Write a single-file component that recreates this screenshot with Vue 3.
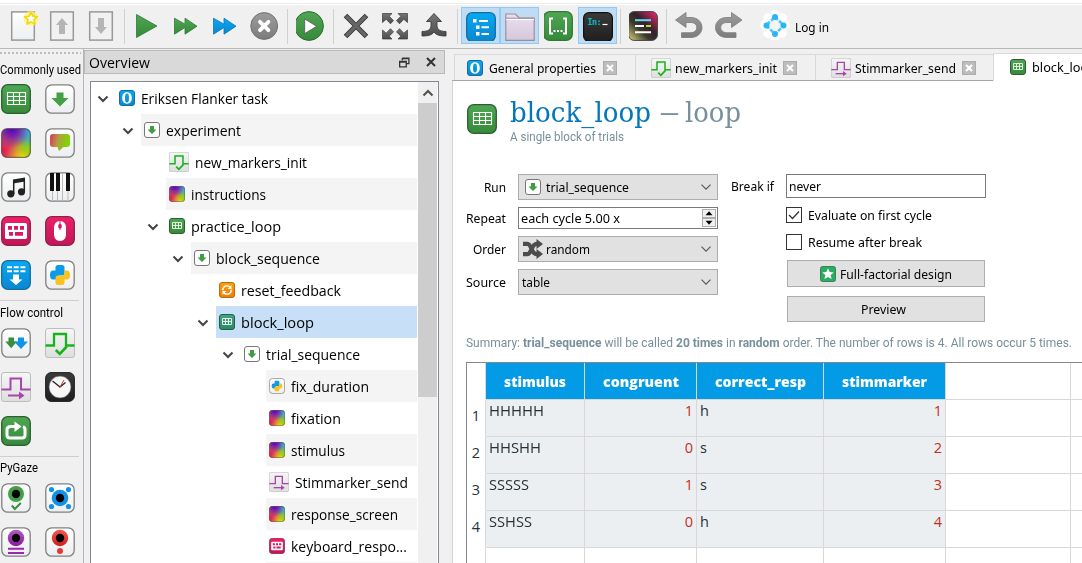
<script setup>
// Stretches a label horizontally to a given width, keeping the flow width in step.
const vFit = {
  mounted(el, binding) {
    const natural = el.getBoundingClientRect().width
    if (!natural || !binding.value) return
    el.style.transform = `scaleX(${binding.value / natural})`
    el.style.marginRight = `${binding.value - natural}px`
  },
}

const tools = [
  { icon: 'new' }, { icon: 'open' }, { icon: 'save' }, { sep: true },
  { icon: 'play' }, { icon: 'ff-green' }, { icon: 'ff-blue' }, { icon: 'stop' }, { sep: true },
  { icon: 'run' }, { sep: true },
  { icon: 'cross' }, { icon: 'expand' }, { icon: 'merge' }, { sep: true },
  { icon: 'list', on: true }, { icon: 'folder', on: true }, { icon: 'braces' }, { icon: 'console', on: true }, { sep: true },
  { icon: 'theme' }, { sep: true },
  { icon: 'undo' }, { icon: 'redo' },
]

const groups = [
  { name: 'Commonly used', w: 81, icons: ['loop', 'seq', 'sketch', 'feedback', 'sampler', 'synth', 'keyboard', 'mouse', 'logger', 'python'] },
  { name: 'Flow control', w: 63, icons: ['parallel', 'minit', 'msend', 'clock', 'repeat'] },
  { name: 'PyGaze', w: 38, icons: ['gaze-ok', 'gaze-cal', 'gaze-log', 'gaze-rec'] },
]

const tree = [
  { d: 0, icon: 'exp', t: 'Eriksen Flanker task', w: 127, open: true },
  { d: 1, icon: 'seq', t: 'experiment', w: 75, open: true },
  { d: 2, icon: 'minit', t: 'new_markers_init', w: 112, big: true },
  { d: 2, icon: 'sketch', t: 'instructions', w: 75 },
  { d: 2, icon: 'loop-s', t: 'practice_loop', w: 90, open: true },
  { d: 3, icon: 'seq', t: 'block_sequence', w: 104, open: true },
  { d: 4, icon: 'reset', t: 'reset_feedback', w: 100 },
  { d: 4, icon: 'loop-s', t: 'block_loop', w: 73, open: true, sel: true },
  { d: 5, icon: 'seq', t: 'trial_sequence', w: 94, open: true },
  { d: 6, icon: 'python', t: 'fix_duration', w: 78 },
  { d: 6, icon: 'sketch', t: 'fixation', w: 50 },
  { d: 6, icon: 'sketch', t: 'stimulus', w: 54 },
  { d: 6, icon: 'msend', t: 'Stimmarker_send', w: 113, big: true },
  { d: 6, icon: 'sketch', t: 'response_screen', w: 107 },
  { d: 6, icon: 'keyboard', t: 'keyboard_respo...', w: 116 },
  { d: 6, icon: '', t: '', w: 0 },
]

const tabs = [
  { icon: 'exp', t: 'General properties', w: 107, cls: 't1' },
  { icon: 'minit', t: 'new_markers_init', w: 102, cls: 't2', big: true },
  { icon: 'msend', t: 'Stimmarker_send', w: 101, cls: 't3', big: true },
  { icon: 'loop-s', t: 'block_loop', w: 64, cls: 't4', active: true },
]

const heads = [['stimulus', 62], ['congruent', 76], ['correct_resp', 91], ['stimmarker', 85]]
const rows = [
  ['HHHHH', 55, 1, 'h', 1],
  ['HHSHH', 52, 0, 's', 2],
  ['SSSSS', 40, 1, 's', 3],
  ['SSHSS', 43, 0, 'h', 4],
]
</script>

<template>
  <svg class="sprite" width="0" height="0">
    <defs>
      <linearGradient id="gW" x1="0" y1="0" x2="0" y2="1"><stop offset="0" stop-color="#fff" /><stop offset="1" stop-color="#eceef0" /></linearGradient>
      <linearGradient id="gG" x1="0" y1="0" x2="0" y2="1"><stop offset="0" stop-color="#4fa653" /><stop offset="1" stop-color="#368a3b" /></linearGradient>
      <linearGradient id="gB" x1="0" y1="0" x2="0" y2="1"><stop offset="0" stop-color="#06a9f4" /><stop offset="1" stop-color="#0b86d0" /></linearGradient>
      <linearGradient id="gP" x1="0" y1="0" x2="0" y2="1"><stop offset="0" stop-color="#ec2068" /><stop offset="1" stop-color="#c01659" /></linearGradient>
      <linearGradient id="gO" x1="0" y1="0" x2="0" y2="1"><stop offset="0" stop-color="#ff9d0a" /><stop offset="1" stop-color="#f57c00" /></linearGradient>
      <linearGradient id="gK" x1="0" y1="0" x2="0" y2="1"><stop offset="0" stop-color="#3a3a3a" /><stop offset="1" stop-color="#1f1f1f" /></linearGradient>
      <linearGradient id="gM" x1="0" y1="0" x2="0" y2="1"><stop offset="0" stop-color="#f6f6f6" /><stop offset="1" stop-color="#dedede" /></linearGradient>
      <linearGradient id="gF" x1="0" y1="0" x2="0" y2="1"><stop offset="0" stop-color="#eadff0" /><stop offset="1" stop-color="#d5c7da" /></linearGradient>
      <linearGradient id="gV" x1="0" y1="0" x2="0" y2="1"><stop offset="0" stop-color="#b45bc4" /><stop offset="1" stop-color="#8a1aa0" /></linearGradient>
      <linearGradient id="gR" x1="0" y1="0" x2="0" y2="1"><stop offset="0" stop-color="#f4574b" /><stop offset="1" stop-color="#cf1f1f" /></linearGradient>
      <linearGradient id="gT" x1="0" y1="1" x2="1" y2="0"><stop offset="0" stop-color="#e0d77a" /><stop offset=".38" stop-color="#3a382c" /><stop offset=".58" stop-color="#33222a" /><stop offset="1" stop-color="#f92672" /></linearGradient>
      <linearGradient id="gE" x1="0" y1="0" x2="0" y2="1"><stop offset="0" stop-color="#777" /><stop offset="1" stop-color="#4c4c4c" /></linearGradient>
      <linearGradient id="gH" x1="0" y1="0" x2="0" y2="1"><stop offset="0" stop-color="#9c9c9c" /><stop offset="1" stop-color="#7c7c7c" /></linearGradient>
      <linearGradient id="gC" x1="0" y1="0" x2="1" y2=".2"><stop offset="0" stop-color="#e0305a" /><stop offset=".45" stop-color="#b0a040" /><stop offset="1" stop-color="#7bd800" /></linearGradient>
      <radialGradient id="r1" cx=".35" cy="0" r=".68"><stop offset="0" stop-color="#4a00c8" /><stop offset=".35" stop-color="#6a10b8" stop-opacity=".85" /><stop offset="1" stop-color="#8020a0" stop-opacity="0" /></radialGradient>
      <radialGradient id="r2" cx="1" cy=".05" r=".65"><stop offset="0" stop-color="#22d0f0" /><stop offset=".4" stop-color="#2cb8e8" stop-opacity=".8" /><stop offset="1" stop-color="#30a0e0" stop-opacity="0" /></radialGradient>
      <radialGradient id="r3" cx="1" cy=".6" r=".6"><stop offset="0" stop-color="#7ce800" /><stop offset="1" stop-color="#80d020" stop-opacity="0" /></radialGradient>
      <radialGradient id="r4" cx=".75" cy="1" r=".6"><stop offset="0" stop-color="#fff000" /><stop offset="1" stop-color="#ffb000" stop-opacity="0" /></radialGradient>
      <radialGradient id="r5" cx="0" cy=".75" r=".75"><stop offset="0" stop-color="#f0104c" /><stop offset="1" stop-color="#e03060" stop-opacity="0" /></radialGradient>
    </defs>

    <!-- toolbar -->
    <symbol id="i-new" viewBox="0 0 30 30"><rect x="2.7" y=".9" width="22.6" height="28.2" fill="url(#gW)" stroke="#999" stroke-width="1.5" /><circle cx="22" cy="7.5" r="7.5" fill="#fff176" opacity=".75" /><path d="M22 1.200l1.900 4 4.400.5-3.300 3 .9 4.400-3.900-2.200-3.900 2.200.9-4.400-3.300-3 4.400-.5z" fill="#fff" stroke="#f2d600" stroke-width="1.600" stroke-linejoin="round" /></symbol>
    <symbol id="i-open" viewBox="0 0 30 30"><rect x="2.700" y=".9" width="22.600" height="28.200" fill="#f1f1f1" stroke="#999" stroke-width="1.500" /><path d="M14 7l6 7h-3v9h-6v-9H8z" fill="#b5b5b5" /></symbol>
    <symbol id="i-save" viewBox="0 0 30 30"><rect x="2.700" y=".9" width="22.600" height="28.200" fill="#f1f1f1" stroke="#999" stroke-width="1.500" /><path d="M14 23l6-7h-3V7h-6v9H8z" fill="#b5b5b5" /></symbol>
    <symbol id="i-play" viewBox="0 0 30 30"><path d="M3.500 3.500v23L24 15z" fill="url(#gG)" stroke="#2f7a34" stroke-width=".8" /></symbol>
    <symbol id="i-ff-green" viewBox="0 0 30 30"><path d="M2.500 7.200v16L13 16.500v6.700l12-8-12-8v6z" fill="url(#gG)" stroke="#2f7a34" stroke-width=".8" /></symbol>
    <symbol id="i-ff-blue" viewBox="0 0 30 30"><path d="M2.500 7.200v16L13 16.500v6.700l12-8-12-8v6z" fill="url(#gB)" stroke="#0b73b5" stroke-width=".8" /></symbol>
    <symbol id="i-stop" viewBox="0 0 30 30"><circle cx="14.200" cy="15" r="13.400" fill="url(#gH)" stroke="#707070" stroke-width="1" /><path d="M10 10.800l8.400 8.400m0-8.400l-8.400 8.400" stroke="#fff" stroke-width="3.800" stroke-linecap="round" /></symbol>
    <symbol id="i-run" viewBox="-2 0 30 30"><circle cx="11" cy="15" r="14.400" fill="url(#gG)" stroke="#2d6e31" stroke-width="1" /><path d="M6.700 8v14.600l12-7.300z" fill="#fff" stroke="#555" stroke-width=".8" /></symbol>
    <symbol id="i-cross" viewBox="0 0 30 30"><path d="M3.500 4.500l21 21m0-21l-21 21" stroke="#333" stroke-width="5" /><path d="M4 5l20 20m0-20L4 25" stroke="#666" stroke-width="3.400" /></symbol>
    <symbol id="i-expand" viewBox="0 0 30 30"><g fill="url(#gE)" stroke="#3a3a3a" stroke-width=".7"><path d="M1.500 2.500h9.500l-2.800 2.800 4.300 4.300-3 3.200-4.300-4.500-3.700 3.200z" /><path d="M26.500 2.500H17l2.800 2.800-4.300 4.300 3 3.200 4.300-4.500 3.700 3.200z" /><path d="M1.500 28h9.500l-2.800-2.800 4.300-4.300-3-3.200-4.300 4.500-3.700-3.200z" /><path d="M26.500 28H17l2.800-2.800-4.300-4.300 3-3.200 4.300 4.500 3.700-3.200z" /></g></symbol>
    <symbol id="i-merge" viewBox="0 0 30 30"><path d="M14 2.500l7.500 8h-4.500v4c0 4 3 6 9 6V25c-6 0-10-1-12-4-2 3-6 4-12 4v-4.500c6 0 9-2 9-6v-4H6.500z" fill="url(#gE)" stroke="#3a3a3a" stroke-width=".9" /></symbol>
    <symbol id="i-list" viewBox="0 -1 30 30"><rect x=".7" y=".7" width="28.600" height="28.600" rx="5.500" fill="url(#gB)" stroke="#176b9e" stroke-width="1.300" /><path d="M7 7h3.500v3.500H7zM10 13.500h3.500V17H10zM10 20h3.500v3.500H10zM13 8h9v2h-9zM15.500 14.300H23v2h-7.500zM15.500 21H23v2h-7.500z" fill="#fff" /></symbol>
    <symbol id="i-folder" viewBox="0 0 30 30"><path d="M.8 29.300V3h9.500l4 4h14.900v22.300z" fill="url(#gF)" stroke="#9a8fa0" stroke-width="1.200" /><path d="M1 8.500h28" stroke="#fff" stroke-width="1.200" /><path d="M1 7.200h28" stroke="#9a8fa0" stroke-width="1" /></symbol>
    <symbol id="i-braces" viewBox="1 0 30 30"><rect x=".7" y=".7" width="28.600" height="28.600" rx="6" fill="url(#gG)" stroke="#2d7a32" stroke-width="1.300" /><path d="M10 7.500H7v15h3M20 7.500h3v15h-3" fill="none" stroke="#fff" stroke-width="2" /><path d="M10.500 19h2v2h-2zM14 19h2v2h-2zM17.500 19h2v2h-2z" fill="#fff" /></symbol>
    <symbol id="i-console" viewBox="0 -1 30 30"><rect x=".6" y=".6" width="28.800" height="28.800" rx="5.500" fill="url(#gK)" stroke="#111" stroke-width="1.200" /><text x="4.500" y="12.500" font-family="DejaVu Sans Mono, monospace" font-size="8.500" font-weight="bold" fill="#10b5bf" textLength="14">In:</text><path d="M19.500 12.500h5" stroke="#fff" stroke-width="1.200" /></symbol>
    <symbol id="i-theme" viewBox="1 0 30 30"><rect x=".6" y=".6" width="28.800" height="28.800" rx="5.500" fill="url(#gT)" stroke="#444" stroke-width="1" /><path d="M7 9.200h16" stroke="#66d9ef" stroke-width="2" /><path d="M7 15h9M7 21.200h16" stroke="#fff" stroke-width="2" /><path d="M18 15h5" stroke="#a6e22e" stroke-width="2" /></symbol>
    <symbol id="i-undo" viewBox="0 0 30 30"><path d="M.5 9L11 1.500v5h5c6 0 11 4 11 10s-5 10-11 10H6.500v-4.800H16c3 0 5.800-2 5.800-5.200S19 11.500 16 11.500h-5v5z" fill="url(#gH)" stroke="#7b7b7b" stroke-width=".8" /></symbol>
    <symbol id="i-redo" viewBox="0 0 30 30"><path d="M28 9L17.500 1.500v5h-5c-6 0-11 4-11 10s5 10 11 10H22v-4.800h-9.500c-3 0-5.800-2-5.800-5.200s2.800-5 5.800-5h5v5z" fill="url(#gH)" stroke="#7b7b7b" stroke-width=".8" /></symbol>
    <symbol id="i-cloud" viewBox="0 0 30 30"><g fill="#fff"><circle cx="15" cy="5" r="5" /><circle cx="15" cy="26" r="5" /><circle cx="5" cy="15" r="5" /><circle cx="25" cy="15" r="5" /><circle cx="8" cy="8" r="4.800" /><circle cx="22" cy="8" r="4.800" /><circle cx="8" cy="23" r="4.800" /><circle cx="22" cy="23" r="4.800" /><circle cx="15" cy="15" r="9" /></g><path d="M15 7l9 8.500-9 8.500-9-8.500z" fill="#f4f4f4" stroke="#55c5f5" stroke-width="2.600" stroke-dasharray="4 1.500" /><g fill="#29b6f6"><circle cx="15" cy="7" r="3" /><circle cx="15" cy="24" r="3" /><circle cx="6.500" cy="15.500" r="3" /><circle cx="23.500" cy="15.500" r="3" /></g></symbol>

    <!-- items -->
    <symbol id="i-loop" viewBox="0 0 30 30"><rect x=".7" y=".7" width="28.600" height="28.600" rx="6" fill="url(#gG)" stroke="#2c5e2f" stroke-width="1.300" /><path d="M6.500 8.500h18v12h-18zM6.500 12.500h18M6.500 16.500h18M12.500 8.500v12M18.500 8.500v12" fill="none" stroke="#fff" stroke-width="1.100" /></symbol>
    <symbol id="i-loop-s" viewBox="0 0 16 16"><rect x=".5" y=".5" width="15" height="15" rx="2.500" fill="url(#gG)" stroke="#2c5e2f" stroke-width="1" /><path d="M3.500 4.500h9v6h-9zM3.500 7.500h9M6.500 4.500v6M9.500 4.500v6" fill="none" stroke="#e4f2e4" stroke-width="1" /></symbol>
    <symbol id="i-box" viewBox="0 0 30 30"><rect x=".8" y=".8" width="28.400" height="28.400" rx="6" fill="url(#gW)" stroke="#808080" stroke-width="1.300" /></symbol>
    <symbol id="i-seq" viewBox="0 0 30 30"><use href="#i-box" /><path d="M11.500 8.500h7V14h5L15 22.500 6.500 14h5z" fill="#43a047" /></symbol>
    <symbol id="i-seq-s" viewBox="0 0 16 16"><rect x=".5" y=".5" width="15" height="15" rx="2.500" fill="#fff" stroke="#777" stroke-width="1" /><path d="M6 4h4v3.500h2.500L8 12 3.500 7.500H6z" fill="#3f9c43" /></symbol>
    <symbol id="i-sketch" viewBox="0 0 30 30"><rect x=".5" y=".5" width="29" height="29" rx="5.500" fill="#c07860" /><rect x=".5" y=".5" width="29" height="29" rx="5.500" fill="url(#r5)" /><rect x=".5" y=".5" width="29" height="29" rx="5.500" fill="url(#r4)" /><rect x=".5" y=".5" width="29" height="29" rx="5.500" fill="url(#r3)" /><rect x=".5" y=".5" width="29" height="29" rx="5.500" fill="url(#r2)" /><rect x=".7" y=".7" width="28.600" height="28.600" rx="5.500" fill="url(#r1)" stroke="#444" stroke-opacity=".65" stroke-width="1.300" /></symbol>
    <symbol id="i-feedback" viewBox="0 0 30 30"><use href="#i-box" /><path d="M8 6h14q3 0 3 3v7q0 3-3 3h-3.500L14 23l-1.500-4H8q-3 0-3-3V9q0-3 3-3z" fill="url(#gC)" /></symbol>
    <symbol id="i-sampler" viewBox="0 0 30 30"><use href="#i-box" /><path d="M12 7.500l12-2v4l-12 2z" fill="#222" /><path d="M12.700 8v14M23.300 6v13.500" stroke="#222" stroke-width="1.500" /><circle cx="9.800" cy="21.800" r="3.600" fill="#222" /><circle cx="20.500" cy="19.800" r="3.600" fill="#222" /></symbol>
    <symbol id="i-synth" viewBox="0 0 30 30"><use href="#i-box" /><path d="M7.500 18v11M12.500 18v11M17.500 1v28M23 18v11" stroke="#bbb" stroke-width="1" /><path d="M5 1h4v18H5zM11 1h4v18h-4zM21 1h4v18h-4z" fill="#111" /></symbol>
    <symbol id="i-keyboard" viewBox="0 0 30 30"><rect x=".7" y=".7" width="28.600" height="28.600" rx="6" fill="url(#gP)" stroke="#8c2248" stroke-width="1.300" /><rect x="4" y="7" width="22" height="16" rx="1.800" fill="#fff" /><path d="M7 10h4v3.800H7zM13 10h4v3.800h-4zM19 10h4v3.800h-4zM8 16h4v3.800H8zM14 16h8v3.800h-8z" fill="#d81b60" /></symbol>
    <symbol id="i-mouse" viewBox="0 0 30 30"><rect x=".7" y=".7" width="28.600" height="28.600" rx="6" fill="url(#gP)" stroke="#8c2248" stroke-width="1.300" /><path d="M15 5c4 0 6 3 6 7v6c0 4-2 7-6 7s-6-3-6-7v-6c0-4 2-7 6-7z" fill="#fff" /><path d="M14.500 5v3c-.9.3-1.300 1.200-1.300 2.200s.4 2 1.300 2.300v1.500h1v-1.500c.9-.3 1.300-1.300 1.300-2.300s-.4-1.900-1.300-2.200V5z" fill="#d81b60" /></symbol>
    <symbol id="i-logger" viewBox="0 0 30 30"><rect x=".7" y=".7" width="28.600" height="28.600" rx="6" fill="url(#gB)" stroke="#176b9e" stroke-width="1.300" /><path d="M6 7.200h5M12.700 7.200h5M19.400 7.200h5M6 11.200h5M12.700 11.200h5M19.400 11.200h5" stroke="#fff" stroke-width="1.900" /><path d="M12 14.500h6v5h3.500L15 25l-6.500-5.500H12z" fill="#fff" /></symbol>
    <symbol id="i-python" viewBox="0 0 30 30"><use href="#i-box" /><path d="M13 5h4q2.500 0 2.500 2.500V13q0 2.500-2.500 2.500h-3.500v4H8q-3 0-3-4.500t3-4.500h2.500V7.500Q10.500 5 13 5z" fill="#0b9be8" /><path d="M17 25h-4q-2.500 0-2.500-2.500V18q0-2.500 2.500-2.500h4q2.500 0 2.500-2.500v-2.500H22q3 0 3 4.500t-3 4.500h-2.500v3Q19.500 25 17 25z" fill="#fbc11c" /></symbol>
    <symbol id="i-parallel" viewBox="0 0 30 30"><use href="#i-box" /><path d="M7.500 9.500h5.500v4h3l-5.800 6.800L4.300 13.500h3.200z" fill="#388e3c" /><path d="M17 9.500h6v4h4L20 21l-7-7.500h4z" fill="#1094e8" /></symbol>
    <symbol id="i-minit" viewBox="0 0 30 30"><rect x=".5" y=".5" width="29" height="29" rx="2.500" fill="url(#gM)" stroke="#bdbdbd" stroke-width="1" /><path d="M.5 17.500H9V6h12v11.500h8.500" fill="none" stroke="#18b41c" stroke-width="2.300" /><path d="M10.800 22l4 4 7-7.500" fill="none" stroke="#18b41c" stroke-width="2.600" /></symbol>
    <symbol id="i-msend" viewBox="0 0 30 30"><rect x=".5" y=".5" width="29" height="29" rx="2.500" fill="url(#gM)" stroke="#bdbdbd" stroke-width="1" /><path d="M.5 17.500h9v-11h10.500v11h9.500" fill="none" stroke="#a646aa" stroke-width="2" /><path d="M7 23.500h13" stroke="#a646aa" stroke-width="2" /><path d="M18 19.500l5.500 4-5.500 4z" fill="#a646aa" /></symbol>
    <symbol id="i-clock" viewBox="0 0 30 30"><rect x=".6" y=".6" width="28.800" height="28.800" rx="5.500" fill="url(#gK)" stroke="#222" /><circle cx="15" cy="15" r="11" fill="#f7f7f7" stroke="#555" stroke-width=".6" /><path d="M15 15L7.500 9M15 15l5.500-4.500" stroke="#222" stroke-width="1.300" /><path d="M14.500 16L19 8" stroke="#e03535" stroke-width="1" /></symbol>
    <symbol id="i-repeat" viewBox="0 0 30 30"><rect x=".7" y=".7" width="28.600" height="28.600" rx="6" fill="url(#gG)" stroke="#2c5e2f" stroke-width="1.300" /><path d="M10 10.500q-4 0-4 3v5.500q0 3 3 3h12q3 0 3-3v-5.500q0-2-2-2.800M9 10.500h5" fill="none" stroke="#fff" stroke-width="3" /><path d="M13.500 5.500l7 5-7 5.500z" fill="#fff" /></symbol>
    <symbol id="i-gaze-ok" viewBox="0 0 30 30"><use href="#i-box" /><circle cx="15" cy="11" r="8" fill="#43a047" /><circle cx="15" cy="11" r="4.200" fill="#000" /><path d="M10.800 22.500l3 3.500 6-6" fill="none" stroke="#388e3c" stroke-width="2" /></symbol>
    <symbol id="i-gaze-cal" viewBox="0 0 30 30"><use href="#i-box" /><g fill="#1192e8"><circle cx="15" cy="15" r="8.300" /><circle cx="6.500" cy="6.500" r="2.600" /><circle cx="23.500" cy="6.500" r="2.600" /><circle cx="6.500" cy="23.500" r="2.600" /><circle cx="23.500" cy="23.500" r="2.600" /></g><circle cx="15" cy="15" r="4.200" fill="#000" /></symbol>
    <symbol id="i-gaze-log" viewBox="0 0 30 30"><use href="#i-box" /><circle cx="15" cy="11" r="8.200" fill="url(#gV)" /><circle cx="15" cy="11" r="4.200" fill="#000" /><path d="M7 21.800h16M7 26h16" stroke="#9c27b0" stroke-width="2" /></symbol>
    <symbol id="i-gaze-rec" viewBox="0 0 30 30"><use href="#i-box" /><circle cx="15" cy="11" r="8.200" fill="url(#gR)" /><circle cx="15" cy="11" r="4.200" fill="#000" /><circle cx="15" cy="24" r="3" fill="#e53935" /></symbol>
    <symbol id="i-exp" viewBox="0 0 16 16"><rect x=".5" y=".5" width="15" height="15" rx="2.500" fill="url(#gB)" stroke="#176b9e" stroke-width="1" /><path fill-rule="evenodd" d="M8 2.300c3.200 0 4.800 2.400 4.800 5.700S11.200 13.700 8 13.700 3.200 11.300 3.200 8 4.800 2.300 8 2.300zM8 3.400C6.400 3.400 6 5.500 6 8s.4 4.600 2 4.600S10 10.500 10 8 9.600 3.400 8 3.400z" fill="#fff" /></symbol>
    <symbol id="i-reset" viewBox="0 0 16 16"><rect x=".5" y=".5" width="15" height="15" rx="2.500" fill="url(#gO)" stroke="#b86a14" stroke-width="1" /><path d="M3.800 8.200A4.200 4.200 0 0 1 11 5M12.200 7.800A4.200 4.200 0 0 1 5 11" fill="none" stroke="#fff" stroke-width="1.500" /><path d="M12.500 3v4h-4zM3.500 13V9h4z" fill="#fff" /></symbol>
    <symbol id="i-star" viewBox="0 0 16 16"><rect x=".5" y=".5" width="15" height="15" rx="2" fill="#27ae60" stroke="#3f7f5c" stroke-width="1" /><path d="M8 2.300l1.700 3.700 4 .4-3 2.700.9 4L8 11l-3.600 2.100.9-4-3-2.700 4-.4z" fill="#fff" /></symbol>
    <symbol id="i-shuffle" viewBox="0 0 20 20"><g fill="none" stroke="#4c4c4c" stroke-width="4.200"><path d="M0 4.800h4.500c4 0 4 10.400 9 10.400h1.500M0 15.200h4.500c4 0 4-10.400 9-10.400h1.500" /></g><path d="M13.500 0l6.500 5-6.500 5zM13.500 10l6.500 5-6.500 5z" fill="#4c4c4c" /></symbol>
    <symbol id="i-down" viewBox="0 0 12 8"><path d="M1.500 1.700L6 6.200l4.500-4.500" fill="none" stroke="#555" stroke-width="1.100" /></symbol>
    <symbol id="i-close" viewBox="0 0 14 14"><rect x=".8" y=".8" width="12.400" height="12.400" fill="#d8d8d8" stroke="#a9a9a9" stroke-width="1.500" /><rect x="2" y="2" width="10" height="10" fill="#bcbcbc" /><path d="M4 4l6 6m0-6l-6 6" stroke="#fff" stroke-width="2.200" /></symbol>
  </svg>

  <div class="window">
    <div class="toolbar">
      <template v-for="(b, i) in tools" :key="i">
        <i v-if="b.sep" class="sep"></i>
        <span v-else class="tool" :class="{ on: b.on }"><svg><use :href="'#i-' + b.icon" /></svg></span>
      </template>
      <svg class="cloud"><use href="#i-cloud" /></svg>
      <span class="tah login" v-fit="34">Log in</span>
    </div>

    <div class="main">
      <aside class="items">
        <div class="handle"></div>
        <section v-for="g in groups" :key="g.name" class="group">
          <h3><span v-fit="g.w">{{ g.name }}</span></h3>
          <div class="grid"><svg v-for="ic in g.icons" :key="ic"><use :href="'#i-' + ic" /></svg></div>
        </section>
      </aside>

      <section class="dock">
        <header>
          <span class="seg" v-fit="61">Overview</span>
          <svg class="float" viewBox="0 0 10 10"><path d="M3 1h6v5H7M3 1v2M3 1.500h6M.6 4h6v5h-6zM.6 4.600h6" fill="none" stroke="#333" stroke-width="1.200" /></svg>
          <svg class="x" viewBox="0 0 10 10"><path d="M1 1l8 8m0-8L1 9" stroke="#333" stroke-width="2" /></svg>
        </header>
        <div class="tree">
          <div class="list">
            <div v-for="(r, i) in tree" :key="i" class="row" :class="['d' + r.d]">
              <svg class="chev" viewBox="0 0 12 8"><path v-if="r.open" d="M1.500 1.500L6 6l4.500-4.500" fill="none" stroke="#444" stroke-width="2" /></svg>
              <div class="cell" :class="{ odd: i % 2, sel: r.sel }">
                <svg :class="{ big: r.big }"><use v-if="r.icon" :href="'#i-' + (r.icon === 'seq' ? 'seq-s' : r.icon)" /></svg>
                <span class="seg" v-fit="r.w">{{ r.t }}</span>
              </div>
            </div>
          </div>
          <div class="scroll">
            <svg viewBox="0 0 12 8"><path d="M1.500 6.500L6 2l4.500 4.500" fill="none" stroke="#505050" stroke-width="2" /></svg>
            <div class="thumb"></div>
          </div>
        </div>
      </section>

      <section class="editor">
        <nav>
          <div v-for="t in tabs" :key="t.t" class="tab" :class="[t.cls, { active: t.active }]">
            <svg class="ti" :class="{ big: t.big }"><use :href="'#i-' + t.icon" /></svg>
            <span class="tah" v-fit="t.w">{{ t.t }}</span>
            <svg v-if="!t.active" class="tc"><use href="#i-close" /></svg>
          </div>
        </nav>
        <div class="page">
          <div class="title">
            <svg><use href="#i-loop" /></svg>
            <div>
              <h1><span class="name" v-fit="141">block_loop</span><span class="dash" v-fit="19">—</span><span class="kind" v-fit="56">loop</span></h1>
              <p><span class="cond" v-fit="114">A single block of trials</span></p>
            </div>
          </div>

          <div class="forms tah">
            <div class="left">
              <div class="field f1"><label><span v-fit="22">Run</span></label><div class="combo"><svg class="c16"><use href="#i-seq-s" /></svg><span v-fit="83">trial_sequence</span><svg class="dn"><use href="#i-down" /></svg></div></div>
              <div class="field f2"><label><span v-fit="40">Repeat</span></label><div class="spin"><span v-fit="99">each cycle 5.00 x</span><div class="steps"><svg viewBox="0 0 12 8"><path d="M6 1.500L10 6H2z" /></svg><svg viewBox="0 0 12 8"><path d="M6 6.500L10 2H2z" /></svg></div></div></div>
              <div class="field f3"><label><span v-fit="33">Order</span></label><div class="combo"><svg class="c20"><use href="#i-shuffle" /></svg><span v-fit="44">random</span><svg class="dn"><use href="#i-down" /></svg></div></div>
              <div class="field f4"><label><span v-fit="40">Source</span></label><div class="combo plain"><span v-fit="28">table</span><svg class="dn"><use href="#i-down" /></svg></div></div>
            </div>
            <div class="break"><span v-fit="43">Break if</span></div>
            <div class="right">
              <div class="input"><span v-fit="32">never</span></div>
              <div class="check k1"><i><svg viewBox="0 0 14 14"><path d="M2 7l3.500 3.500L12 3.500" fill="none" stroke="#333" stroke-width="1.300" /></svg></i><span v-fit="124">Evaluate on first cycle</span></div>
              <div class="check k2"><i></i><span v-fit="114">Resume after break</span></div>
              <div class="button b1"><svg class="c16"><use href="#i-star" /></svg><span v-fit="112">Full-factorial design</span></div>
              <div class="button b2"><span v-fit="45">Preview</span></div>
            </div>
          </div>

          <div class="summary cond"><span v-fit="606">Summary: <b>trial_sequence</b> will be called <b>20 times</b> in <b>random</b> order. The number of rows is 4. All rows occur 5 times.</span></div>

          <div class="table seg">
            <div class="th rn"></div>
            <div v-for="h in heads" :key="h[0]" class="th blue"><span v-fit="h[1]">{{ h[0] }}</span></div>
            <div class="th"></div><div class="th"></div>
            <template v-for="(r, i) in rows" :key="i">
              <div class="td rn">{{ i + 1 }}</div>
              <div class="td fill"><span v-fit="r[1]">{{ r[0] }}</span></div>
              <div class="td fill num">{{ r[2] }}</div>
              <div class="td fill">{{ r[3] }}</div>
              <div class="td fill num">{{ r[4] }}</div>
              <div class="td"></div><div class="td"></div>
            </template>
            <div v-for="n in 7" :key="n" class="td" :class="{ rn: n === 1 }"></div>
          </div>
        </div>
      </section>
    </div>
  </div>
</template>

<style>
body { margin: 0; overflow: hidden; }
</style>

<style scoped>
* { box-sizing: border-box; }
.sprite { position: absolute; }
svg { display: block; flex: none; overflow: visible; }
span { flex: none; white-space: nowrap; }
.window { width: 1082px; height: 563px; overflow: hidden; background: #f0f0f0; color: #000; display: flex; flex-direction: column; }
.seg { font-family: "Open Sans", "Noto Sans", sans-serif; font-size: 14.5px; }
.tah { font-family: "Noto Sans", sans-serif; font-size: 12.5px; }
.cond, h3 { font-family: Roboto, sans-serif; }
span:not(.tool) { display: inline-block; transform-origin: 0 50%; }

.toolbar { height: 49px; flex: none; border-top: 3px solid #fff; border-bottom: 1px solid #b7b9b7; box-shadow: inset 0 1px #ececec, inset 0 2px #fff; display: flex; padding: 4px 0 0 4px; }
.tool { width: 39px; height: 37px; padding: 4px 0 0 5px; display: block; flex: none; }
.tool svg { width: 30px; height: 30px; }
.tool.on { background: #c0dcf3; box-shadow: inset 0 0 0 1px #90c8f6; }
.sep { width: 7px; height: 35px; margin-top: 2px; flex: none; background: linear-gradient(#d0d0d0, #d0d0d0) 3px 0 / 1px 100% no-repeat; }
.cloud { width: 30px; height: 30px; margin: 3px 5px 0 12px; }
.login { line-height: 37px; margin-top: 2px; height: 37px; }

.main { flex: 1; display: flex; min-height: 0; }
.items { width: 84px; border-right: 1px solid #b5b5b5; flex: none; padding-top: 3px; overflow: hidden; }
.handle { height: 3px; width: 81px; background: repeating-linear-gradient(90deg, #bdbdbd 0 2px, transparent 2px 4px) 0 0 / 100% 2px no-repeat; }
.group { padding-left: 1px; }
.group + .group { margin-top: 9px; }
.group h3 { margin: 0 0 0 -1px; height: 29px; padding-top: 7px; font-size: 12.5px; line-height: 16px; font-weight: 400; }
.group + .group h3 { border-top: 1px solid #cfcfcf; width: 79px; height: 28px; padding-top: 4px; }
.grid { display: grid; grid-template-columns: 30px 30px; gap: 14px; padding-bottom: 1px; }
.grid svg { width: 30px; height: 30px; }
.group:last-child h3 { height: 28px; padding-top: 3px; }
.group + .group:last-child h3 { height: 27px; }

.dock { width: 361px; flex: none; padding-top: 1px; display: flex; flex-direction: column; }
.dock header { height: 24px; width: 361px; background: #d9d9d9; border: 1px solid #b9b9b9; display: flex; align-items: center; padding-left: 4px; }
.dock header .float { width: 11px; height: 11px; margin-left: auto; }
.dock header .x { width: 10px; height: 10px; margin: 0 8px 0 16px; }
.tree { flex: 1; margin: 7px 0 0 6px; width: 349px; border: 1px solid #828790; border-bottom: 0; background: #fff; display: flex; overflow: hidden; min-height: 0; }
.list { width: 326px; flex: none; }
.row { height: 32px; display: flex; align-items: center; }
.chev { width: 12px; height: 8px; margin: 0 7px 0 6px; }
.cell { flex: 1; height: 32px; display: flex; align-items: center; padding-left: 3px; min-width: 0; }
.cell svg { width: 16px; height: 16px; margin-right: 6px; }
.cell svg.big { width: 20px; height: 20px; }
.cell.odd { background: #f4f4f4; }
.cell.sel { background: #c7e0f7; }
.sel svg { filter: hue-rotate(32deg) saturate(.9); }
.cell span { line-height: 20px; padding-top: 2px; }
.chev { padding-top: 0; margin-top: 1px; }
.d1 { padding-left: 25px; } .d2 { padding-left: 50px; } .d3 { padding-left: 75px; }
.d4 { padding-left: 100px; } .d5 { padding-left: 125px; } .d6 { padding-left: 150px; }
.scroll { width: 19px; background: #f0f0f0; margin-left: 1px; }
.scroll svg { width: 12px; height: 8px; margin: 7px auto 6px 4px; }
.thumb { height: 294px; background: #cdcdcd; }

.editor { width: 630px; margin-left: 7px; flex: none; display: flex; flex-direction: column; }
nav { height: 32px; flex: none; display: flex; align-items: flex-end; padding-left: 2px; box-shadow: inset 0 -1px #a5a5a5; overflow: hidden; }
.tab { height: 26px; border: 1px solid #d9d9d9; border-right: 0; border-bottom: 0; display: flex; align-items: center; flex: none; margin-bottom: 1px; }
.tab span { padding-top: 1px; }
.ti { width: 16px; height: 16px; margin-right: 6px; }
.ti.big { width: 20px; height: 20px; margin-right: 4px; }
.tc { width: 14px; height: 14px; margin-left: 7px; }
.t1 { width: 181px; padding-left: 12px; } .t2 { width: 180px; padding-left: 15px; } .t3 { width: 178px; padding-left: 15px; }
.t2 .tc, .t3 .tc { margin-left: 6px; }
.t4 { width: 120px; padding-left: 16px; height: 28px; margin-bottom: 0; padding-bottom: 2px; background: #fff; }
.page { flex: 1; background: #fff; border-left: 1px solid #d4d4d4; padding-left: 13px; min-height: 0; overflow: hidden; }
.title { display: flex; padding: 15px 0 0 1px; height: 93px; }
.title svg { width: 30px; height: 30px; margin: 8px 13px 0 0; }
h1 { margin: 0; height: 34px; line-height: 32px; font-family: "DejaVu Serif", serif; font-weight: 400; font-size: 27.5px; display: flex; color: #78909c; }
.name { color: #0277bd; }
.dash { margin-left: 9px; }
.kind { margin-left: 6px; }
.title p { margin: 0; font-size: 12px; line-height: 14px; color: #78909c; }

.forms { display: flex; height: 158px; }
.left { width: 252px; }
.field { display: flex; align-items: center; }
.field label { width: 40px; margin-right: 12px; display: flex; justify-content: flex-end; }
.combo { width: 200px; height: 26px; background: #e1e1e1; border: 1px solid #adadad; display: flex; align-items: center; padding-left: 6px; }
.combo.plain { padding-left: 3px; }
.c16 { width: 16px; height: 16px; margin-right: 5px; }
.c20 { width: 20px; height: 20px; margin: -1px 3px 0 -2px; }
.dn { width: 12px; height: 8px; margin-left: auto; margin-right: 5px; }
.spin { width: 200px; height: 22px; border: 1px solid #7a7a7a; display: flex; align-items: center; padding-left: 2px; }
.steps { margin-left: auto; margin-right: 1px; width: 14px; height: 18px; display: flex; flex-direction: column; }
.steps svg { width: 14px; height: 9px; background: #f0f0f0; border: 1px solid #adadad; }
.f2 { margin: 7px 0; } .f4 { margin-top: 7px; }
.break { width: 68px; padding: 4px 0 0 13px; line-height: 17px; }
.input { width: 200px; height: 24px; border: 1px solid #7a7a7a; padding: 1px 0 0 2px; display: flex; align-items: center; }
.check { display: flex; align-items: center; height: 16px; }
.check i { width: 16px; height: 16px; border: 1px solid #333; margin-right: 6px; }
.k1 { margin: 9px 0 11px; } .k2 { margin-bottom: 10px; }
.button { width: 198px; margin-left: 1px; height: 27px; background: #e1e1e1; border: 1px solid #adadad; display: flex; align-items: center; justify-content: center; }
.button span { padding-top: 1px; }
.button .c16 { margin-right: 4px; }
.b2 { margin-top: 9px; height: 26px; padding-right: 5px; }

.summary { font-size: 12.5px; line-height: 16px; height: 30px; padding-top: 3px; color: #78909c; }
.table { width: 700px; border: 1px solid #828790; display: grid; grid-template-columns: 19px 99px 112px 127px 122px 125px 94px; color: #263238; }
.th { height: 37px; border-right: 1px solid #d8d8d8; border-bottom: 1px solid #d8d8d8; display: flex; align-items: center; justify-content: center; }
.blue { background: #039be5; color: #fff; font-weight: 800; font-size: 14px; }
.td { height: 37px; border-right: 1px solid #d8d8d8; border-bottom: 1px solid #d8d8d8; padding: 0 3px; line-height: 22px; }
.rn { border-bottom-color: transparent; }
.td.rn { line-height: 32px; text-align: right; padding-right: 5px; }
.fill { background: #eceff1; }
.num { text-align: right; color: #c4301c; }
</style>
